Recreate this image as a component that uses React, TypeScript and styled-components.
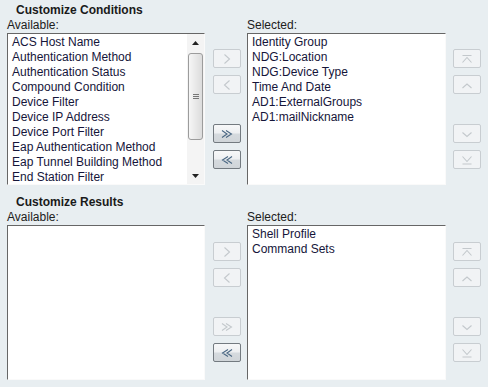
import React from 'react';
import styled, { createGlobalStyle } from 'styled-components';

const GlobalStyle = createGlobalStyle`
  html, body {
    margin: 0;
    padding: 0;
    background: #e8eef1;
  }

  body {
    font-family: Arial, "Liberation Sans", sans-serif;
    font-size: 12px;
  }
`;

const Page = styled.div`
  width: 488px;
  height: 387px;
  overflow: hidden;
  background: #e8eef1;
`;

const Section = styled.section`
  padding: 3px 0 7px 7px;
`;

const Title = styled.h3`
  margin: 0 0 1px 9px;
  font-size: 12px;
  font-weight: bold;
  line-height: 14px;
  color: #1a1a1a;
`;

const Grid = styled.div`
  display: grid;
  grid-template-columns: 198px 42px 199px 42px;
  grid-template-rows: 15px auto;
`;

const Label = styled.div<{ $col: number }>`
  grid-row: 1;
  grid-column: ${props => props.$col};
  line-height: 15px;
  color: #202020;
`;

const ListBox = styled.div<{ $height: number }>`
  grid-row: 2;
  height: ${props => props.$height}px;
  box-sizing: border-box;
  border: 1px solid;
  border-color: #666 #fafafa #fafafa #666;
  background: #fff;
  display: flex;
  overflow: hidden;
`;

const Items = styled.ul`
  flex: 1;
  list-style: none;
  margin: 0;
  padding: 1px 4px;
`;

const Item = styled.li`
  line-height: 15px;
  white-space: nowrap;
  color: #15153a;
`;

const Scrollbar = styled.div`
  width: 17px;
  display: flex;
  flex-direction: column;
  background: #f4f4f4;
`;

const ScrollArrow = styled.div`
  height: 17px;
  display: flex;
  align-items: center;
  justify-content: center;
  color: #222;
`;

const Track = styled.div`
  flex: 1;
`;

const Thumb = styled.div`
  margin: 2px 1px 0;
  height: 87px;
  box-sizing: border-box;
  border: 1px solid #9c9c9c;
  border-radius: 3px;
  background: linear-gradient(to right, #f6f6f6, #dcdcdc);
  display: flex;
  align-items: center;
  justify-content: center;
  color: #777;
`;

const ButtonColumn = styled.div<{ $top: number; $left: number }>`
  grid-row: 2;
  display: flex;
  flex-direction: column;
  padding: ${props => props.$top}px 0 0 ${props => props.$left}px;
`;

const ButtonGroup = styled.div`
  display: flex;
  flex-direction: column;
  gap: 7px;
  & + & {
    margin-top: 30px;
  }
`;

const MoveButton = styled.button<{ $active?: boolean }>`
  width: 28px;
  height: 19px;
  padding: 0;
  box-sizing: border-box;
  border-radius: 2px;
  border: 1px solid ${props => (props.$active ? '#737a80' : '#c8cdd1')};
  background: ${props =>
    props.$active
      ? 'linear-gradient(#f7f8f9 0%, #eef0f2 45%, #d5dade 55%, #d0d5d9 100%)'
      : '#f1f3f5'};
  color: ${props => (props.$active ? '#4a6783' : '#c3c8cc')};
  display: flex;
  align-items: center;
  justify-content: center;
`;

type Glyph = 'right' | 'left' | 'allRight' | 'allLeft' | 'top' | 'up' | 'down' | 'bottom';

const glyphPaths: Record<Glyph, string> = {
  right: 'M3.5 1.5 L8.5 6 L3.5 10.5',
  left: 'M8.5 1.5 L3.5 6 L8.5 10.5',
  allRight: 'M1 2.5 L6 6 L1 9.5 M5 2.5 L10.5 6 L5 9.5',
  allLeft: 'M11 2.5 L6 6 L11 9.5 M7 2.5 L1.5 6 L7 9.5',
  top: 'M1.5 2.5 H10.5 M1.5 9.5 L6 4.5 L10.5 9.5',
  up: 'M1.5 9 L6 5 L10.5 9',
  down: 'M1.5 4.5 L6 8.5 L10.5 4.5',
  bottom: 'M1.5 2.5 L6 7.5 L10.5 2.5 M1.5 10 H10.5',
};

const GlyphIcon: React.FC<{ kind: Glyph }> = ({ kind }) => (
  <svg width="12" height="12" viewBox="0 0 12 12" fill="none">
    <path d={glyphPaths[kind]} stroke="currentColor" strokeWidth="1.1" />
  </svg>
);

interface IList {
  items: string[];
  height: number;
  scroll?: boolean;
}

const List: React.FC<IList> = ({ items, height, scroll }) => (
  <ListBox $height={height}>
    <Items>
      {items.map(item => (
        <Item key={item}>{item}</Item>
      ))}
    </Items>
    {scroll && (
      <Scrollbar>
        <ScrollArrow>
          <svg width="7" height="4" viewBox="0 0 7 4">
            <polygon points="0,4 3.5,0 7,4" fill="currentColor" />
          </svg>
        </ScrollArrow>
        <Track>
          <Thumb>
            <svg width="6" height="5" viewBox="0 0 6 5">
              <path d="M0 0.5 H6 M0 2.5 H6 M0 4.5 H6" stroke="currentColor" strokeWidth="1" />
            </svg>
          </Thumb>
        </Track>
        <ScrollArrow>
          <svg width="7" height="4" viewBox="0 0 7 4">
            <polygon points="0,0 3.5,4 7,0" fill="currentColor" />
          </svg>
        </ScrollArrow>
      </Scrollbar>
    )}
  </ListBox>
);

interface IPicker {
  title: string;
  available: string[];
  selected: string[];
  height: number;
  top: number;
  scroll?: boolean;
  addAllActive?: boolean;
}

const Picker: React.FC<IPicker> = ({ title, available, selected, height, top, scroll, addAllActive }) => (
  <Section>
    <Title>{title}</Title>
    <Grid>
      <Label $col={1}>Available:</Label>
      <Label $col={3}>Selected:</Label>
      <List items={available} height={height} scroll={scroll} />
      <ButtonColumn $top={top} $left={8}>
        <ButtonGroup>
          <MoveButton><GlyphIcon kind="right" /></MoveButton>
          <MoveButton><GlyphIcon kind="left" /></MoveButton>
        </ButtonGroup>
        <ButtonGroup>
          <MoveButton $active={addAllActive}><GlyphIcon kind="allRight" /></MoveButton>
          <MoveButton $active><GlyphIcon kind="allLeft" /></MoveButton>
        </ButtonGroup>
      </ButtonColumn>
      <List items={selected} height={height} />
      <ButtonColumn $top={top} $left={7}>
        <ButtonGroup>
          <MoveButton><GlyphIcon kind="top" /></MoveButton>
          <MoveButton><GlyphIcon kind="up" /></MoveButton>
        </ButtonGroup>
        <ButtonGroup>
          <MoveButton><GlyphIcon kind="down" /></MoveButton>
          <MoveButton><GlyphIcon kind="bottom" /></MoveButton>
        </ButtonGroup>
      </ButtonColumn>
    </Grid>
  </Section>
);

const conditions = [
  'ACS Host Name',
  'Authentication Method',
  'Authentication Status',
  'Compound Condition',
  'Device Filter',
  'Device IP Address',
  'Device Port Filter',
  'Eap Authentication Method',
  'Eap Tunnel Building Method',
  'End Station Filter',
];

const selectedConditions = [
  'Identity Group',
  'NDG:Location',
  'NDG:Device Type',
  'Time And Date',
  'AD1:ExternalGroups',
  'AD1:mailNickname',
];

const selectedResults = ['Shell Profile', 'Command Sets'];

const App: React.FC = () => (
  <Page>
    <GlobalStyle />
    <Picker
      title="Customize Conditions"
      available={conditions}
      selected={selectedConditions}
      height={152}
      top={16}
      scroll
      addAllActive
    />
    <Picker
      title="Customize Results"
      available={[]}
      selected={selectedResults}
      height={155}
      top={17}
    />
  </Page>
);

export default App;
